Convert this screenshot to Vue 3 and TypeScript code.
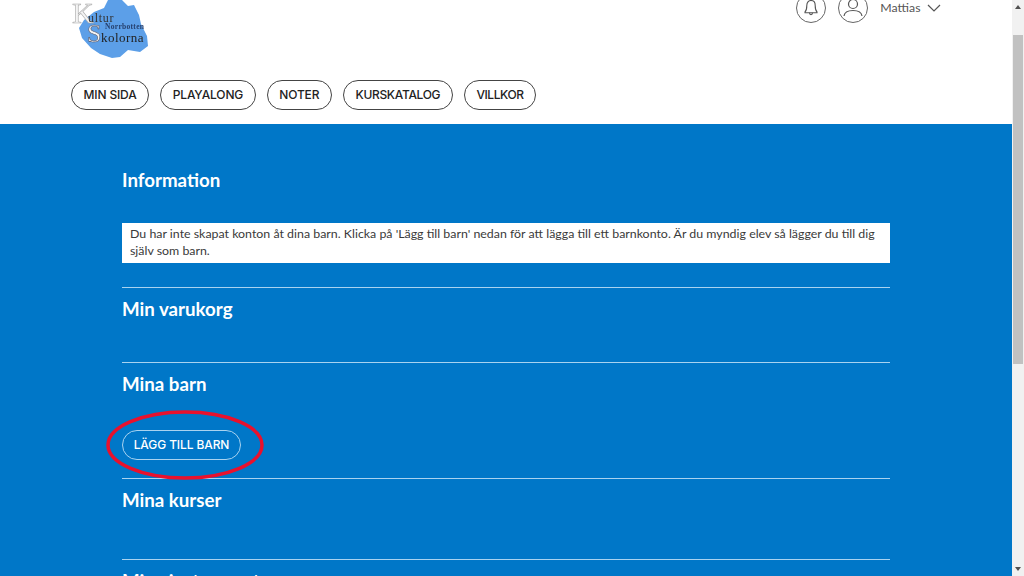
<script setup lang="ts">
const navItems: string[] = ['MIN SIDA', 'PLAYALONG', 'NOTER', 'KURSKATALOG', 'VILLKOR']
</script>

<template>
  <div class="screen">
    <main class="page">
      <header class="header">
        <div class="top">
          <div class="logo">
            <svg class="logo-shape" width="80" height="60" viewBox="0 0 80 60">
              <path d="M37 0 L51 0 L57 6 L63 5 L68 15 L70 24 L76 36 L77 46 L69 52 L57 50 L49 57 L41 58 L29 54 L20 48 L11 38 L8 28 L13 20 L23 12 L33 8 Z" fill="#5c9fe8" />
            </svg>
            <span class="lg lg-k">K</span>
            <span class="lg lg-ultur">ultur</span>
            <span class="lg lg-norr">Norrbotten</span>
            <span class="lg lg-s">S</span>
            <span class="lg lg-kol">kolorna</span>
          </div>
          <div class="user">
            <span class="circle">
              <svg width="14" height="18" viewBox="0 0 14 18" fill="none" stroke="#555" stroke-width="1.1">
                <path d="M1 13 C2.500 11.500 2.800 9.500 2.800 6.500 C2.800 3.500 4.500 1.500 7 1.500 C9.500 1.500 11.200 3.500 11.200 6.500 C11.200 9.500 11.500 11.500 13 13 L13 13.800 L1 13.800 Z" />
                <path d="M5.500 13.800 C5.500 16.200 8.500 16.200 8.500 13.800" />
              </svg>
            </span>
            <span class="circle">
              <svg width="20" height="18" viewBox="0 0 20 18" fill="none" stroke="#555" stroke-width="1.2">
                <circle cx="10" cy="5" r="4.500" />
                <path d="M1 17 C1.500 13 6 11.500 10 11.500 C14 11.500 18.500 13 19 17" />
              </svg>
            </span>
            <span class="name">Mattias</span>
            <svg class="chev" width="14" height="8" viewBox="0 0 14 8" fill="none" stroke="#555" stroke-width="1.2">
              <path d="M1 1 L7 7 L13 1" />
            </svg>
          </div>
        </div>
        <nav class="nav">
          <a v-for="item in navItems" :key="item" class="pill">{{ item }}</a>
        </nav>
      </header>

      <section class="content">
        <div class="block block-info">
          <h2>Information</h2>
          <p class="notice">Du har inte skapat konton åt dina barn. Klicka på 'Lägg till barn' nedan för att lägga till ett barnkonto. Är du myndig elev så lägger du till dig själv som barn.</p>
        </div>
        <div class="block block-cart">
          <h2>Min varukorg</h2>
        </div>
        <div class="block block-kids">
          <h2>Mina barn</h2>
          <div class="action">
            <button class="add" type="button">LÄGG TILL BARN</button>
            <svg class="ring" width="160" height="72" viewBox="0 0 160 72" fill="none">
              <ellipse cx="80" cy="36" rx="77" ry="33" stroke="#e8112d" stroke-width="3.500" />
            </svg>
          </div>
        </div>
        <div class="block block-courses">
          <h2>Mina kurser</h2>
        </div>
        <div class="block block-last">
          <h2>Mina instrument</h2>
        </div>
      </section>
    </main>
    <div class="scrollbar">
      <div class="arrow"></div>
      <div class="thumb"></div>
      <div class="arrow-down"></div>
    </div>
  </div>
</template>

<style>
html, body { margin: 0; height: 100%; overflow: hidden; }
</style>

<style scoped>
.screen {
  display: flex;
  width: 1024px;
  height: 576px;
  overflow: hidden;
  font-family: Lato, "Open Sans", sans-serif;
}
.page { flex: 1; min-width: 0; background: #0077c8; }
.header { background: #fff; height: 124px; box-sizing: border-box; padding: 0 71px; }
.top { display: flex; justify-content: space-between; height: 80px; }
.logo { position: relative; width: 80px; height: 60px; filter: blur(0.3px); overflow: hidden; }
.logo-shape { position: absolute; left: 0; top: 0; }
.lg { position: absolute; font-family: "Liberation Serif", serif; white-space: nowrap; }
.lg-k { left: 1px; top: 2px; font-size: 30px; line-height: 0.7; letter-spacing: -6px; color: #f4f4f4; -webkit-text-stroke: 0.6px #aaa; }
.lg-ultur { left: 17px; top: 12px; font-size: 12px; line-height: 1; color: #333; letter-spacing: 0.7px; }
.lg-norr { left: 34px; top: 24px; font-size: 7.5px; line-height: 0.9; font-weight: 700; color: #26406e; letter-spacing: 0.3px; }
.lg-s { left: 16px; top: 24px; font-size: 26px; line-height: 0.8; color: #f4f4f4; -webkit-text-stroke: 0.6px #556; }
.lg-kol { left: 30px; top: 32px; font-size: 13px; line-height: 0.85; color: #222; letter-spacing: 0.45px; }
.user {
  display: flex;
  align-items: center;
  align-self: flex-start;
  margin-top: -9px;
  color: #555;
}
.circle {
  display: flex;
  align-items: center;
  justify-content: center;
  box-sizing: border-box;
  width: 30px;
  height: 30px;
  border: 1px solid #666;
  border-radius: 50%;
  margin-right: 12px;
}
.name { font-size: 12.3px; margin-right: 6.5px; line-height: 34px; }
.chev { margin-top: -1px; }
.nav { display: flex; gap: 11.2px; }
.pill {
  display: flex;
  align-items: center;
  box-sizing: border-box;
  height: 30px;
  padding: 0 11.5px 1px;
  border: 1px solid #444;
  border-radius: 15px;
  font-family: Inter, Lato, sans-serif;
  font-size: 12px;
  font-weight: 450;
  letter-spacing: -0.15px;
  color: #222;
}
.pill:nth-child(4) { letter-spacing: -0.33px; }
.pill:nth-child(5) { letter-spacing: -0.43px; }
.content { padding: 0 122px; color: #fff; width: 768px; }
h2 { margin: 0; font-size: 18.7px; line-height: 22px; font-weight: 700; }
.block { border-top: 1px solid #a9d3f0; box-sizing: border-box; padding-top: 10px; }
.block-info { border-top: 0; height: 163px; padding-top: 45px; }
.notice {
  margin: 32px 0 0;
  padding: 2px 8px 0;
  background: #fff;
  color: #3a3a3a;
  font-size: 12.38px;
  line-height: 17px;
  height: 40px;
  box-sizing: border-box;
}
.block-cart { height: 75px; }
.block-kids { height: 116px; }
.block-courses { height: 81px; }
.action { position: relative; margin-top: 35px; height: 30px; }
.add {
  height: 30px;
  width: 119px;
  padding: 0 0 1px;
  background: transparent;
  border: 1px solid #a9d3f0;
  border-radius: 15px;
  color: #fff;
  font: 450 12px Inter, Lato, sans-serif;
  letter-spacing: -0.1px;
}
.ring { position: absolute; left: -17px; top: -21px; }
.scrollbar { position: relative; width: 12px; background: #f1f1f1; }
.arrow {
  position: absolute;
  left: 3px;
  top: 5px;
  border-left: 3px solid transparent;
  border-right: 3px solid transparent;
  border-bottom: 4px solid #505050;
}
.arrow-down {
  position: absolute;
  left: 3px;
  bottom: 5px;
  border-left: 3px solid transparent;
  border-right: 3px solid transparent;
  border-top: 4px solid #505050;
}
.thumb { position: absolute; left: 1px; right: 1px; top: 35px; height: 329px; background: #c1c1c1; }
</style>
